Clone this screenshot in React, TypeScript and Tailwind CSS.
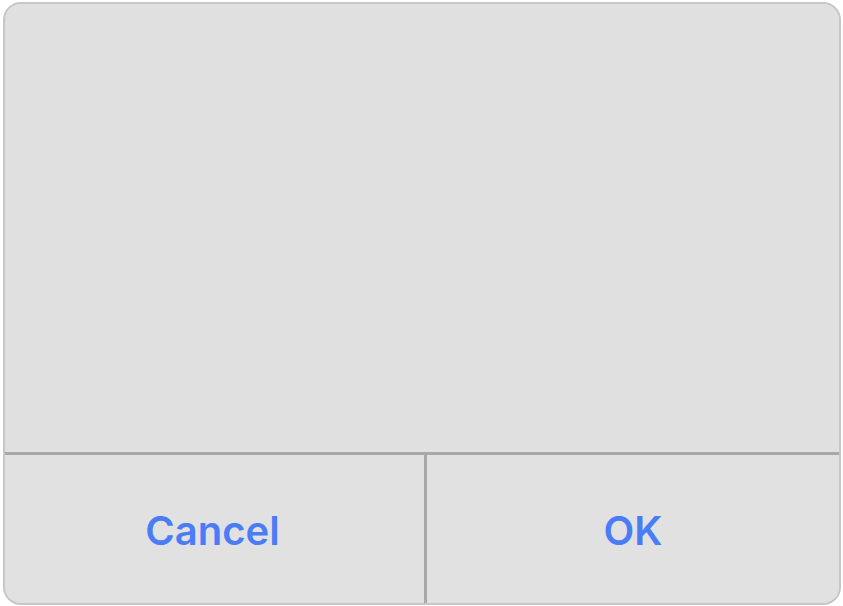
export default function App() {
  return (
    <div className="w-[843px] h-[606px] bg-white pt-[2px] pl-[3px]">
      <div className="w-[838px] h-[603px] flex flex-col rounded-[18px] border-2 border-[#c6c6c6] bg-[#e0e0e0] overflow-hidden">
        {/* message area (content blanked out) */}
        <div className="h-[448px] bg-[#e0e0e0]" />
        <div className="h-[3px] bg-[#a8a8a8]" />
        {/* buttons */}
        <div
          className="flex-1 grid grid-cols-[419px_3px_1fr] bg-[#e1e1e1]"
          style={{ fontFamily: 'Inter, "Liberation Sans", sans-serif' }}
        >
          <button className="flex items-center justify-center pt-[4px] pr-[4px] text-[40px] font-semibold text-[#4a7cf6]">
            Cancel
          </button>
          <div className="bg-[#a8a8a8]" />
          <button className="flex items-center justify-center pt-[4px] text-[40px] font-semibold text-[#4a7cf6]">
            OK
          </button>
        </div>
      </div>
    </div>
  )
}
